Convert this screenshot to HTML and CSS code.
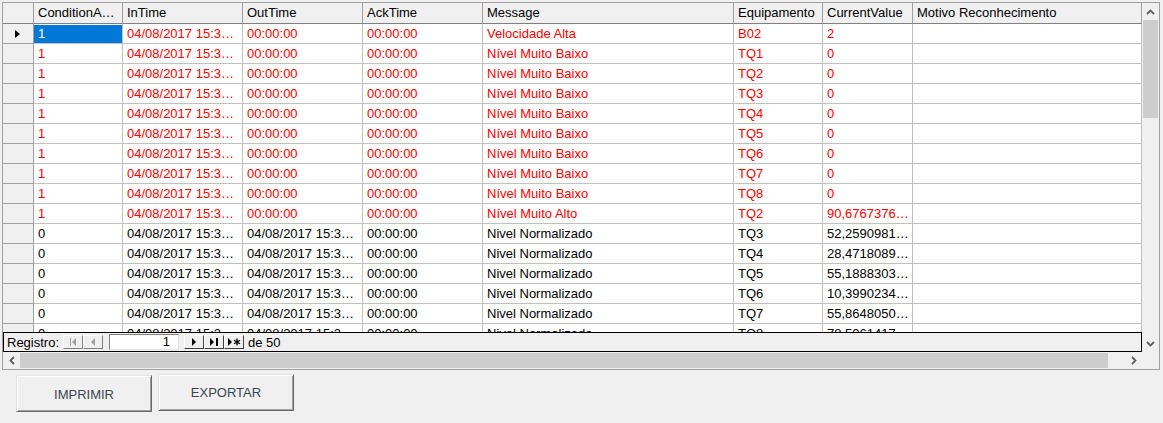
FILE: index.html
```html
<!DOCTYPE html>
<html lang="pt">
<head>
    <meta charset="UTF-8">
    <title>Alarmes</title>
    <link rel="stylesheet" href="styles.css">
</head>
<body>
    <div class="grid-frame">
        <div class="grid-body">
            <div class="grid-row grid-head">
                <div class="cell row-head"></div>
                <div class="cell">ConditionA…</div>
                <div class="cell">InTime</div>
                <div class="cell">OutTime</div>
                <div class="cell">AckTime</div>
                <div class="cell">Message</div>
                <div class="cell">Equipamento</div>
                <div class="cell">CurrentValue</div>
                <div class="cell">Motivo Reconhecimento</div>
            </div>

            <div class="grid-row active">
                <div class="cell row-head"><span class="current-mark"></span></div>
                <div class="cell selected">1</div>
                <div class="cell">04/08/2017 15:3…</div>
                <div class="cell">00:00:00</div>
                <div class="cell">00:00:00</div>
                <div class="cell">Velocidade Alta</div>
                <div class="cell">B02</div>
                <div class="cell">2</div>
                <div class="cell"></div>
            </div>
            <div class="grid-row active">
                <div class="cell row-head"></div>
                <div class="cell">1</div>
                <div class="cell">04/08/2017 15:3…</div>
                <div class="cell">00:00:00</div>
                <div class="cell">00:00:00</div>
                <div class="cell">Nível Muito Baixo</div>
                <div class="cell">TQ1</div>
                <div class="cell">0</div>
                <div class="cell"></div>
            </div>
            <div class="grid-row active">
                <div class="cell row-head"></div>
                <div class="cell">1</div>
                <div class="cell">04/08/2017 15:3…</div>
                <div class="cell">00:00:00</div>
                <div class="cell">00:00:00</div>
                <div class="cell">Nível Muito Baixo</div>
                <div class="cell">TQ2</div>
                <div class="cell">0</div>
                <div class="cell"></div>
            </div>
            <div class="grid-row active">
                <div class="cell row-head"></div>
                <div class="cell">1</div>
                <div class="cell">04/08/2017 15:3…</div>
                <div class="cell">00:00:00</div>
                <div class="cell">00:00:00</div>
                <div class="cell">Nível Muito Baixo</div>
                <div class="cell">TQ3</div>
                <div class="cell">0</div>
                <div class="cell"></div>
            </div>
            <div class="grid-row active">
                <div class="cell row-head"></div>
                <div class="cell">1</div>
                <div class="cell">04/08/2017 15:3…</div>
                <div class="cell">00:00:00</div>
                <div class="cell">00:00:00</div>
                <div class="cell">Nível Muito Baixo</div>
                <div class="cell">TQ4</div>
                <div class="cell">0</div>
                <div class="cell"></div>
            </div>
            <div class="grid-row active">
                <div class="cell row-head"></div>
                <div class="cell">1</div>
                <div class="cell">04/08/2017 15:3…</div>
                <div class="cell">00:00:00</div>
                <div class="cell">00:00:00</div>
                <div class="cell">Nível Muito Baixo</div>
                <div class="cell">TQ5</div>
                <div class="cell">0</div>
                <div class="cell"></div>
            </div>
            <div class="grid-row active">
                <div class="cell row-head"></div>
                <div class="cell">1</div>
                <div class="cell">04/08/2017 15:3…</div>
                <div class="cell">00:00:00</div>
                <div class="cell">00:00:00</div>
                <div class="cell">Nível Muito Baixo</div>
                <div class="cell">TQ6</div>
                <div class="cell">0</div>
                <div class="cell"></div>
            </div>
            <div class="grid-row active">
                <div class="cell row-head"></div>
                <div class="cell">1</div>
                <div class="cell">04/08/2017 15:3…</div>
                <div class="cell">00:00:00</div>
                <div class="cell">00:00:00</div>
                <div class="cell">Nível Muito Baixo</div>
                <div class="cell">TQ7</div>
                <div class="cell">0</div>
                <div class="cell"></div>
            </div>
            <div class="grid-row active">
                <div class="cell row-head"></div>
                <div class="cell">1</div>
                <div class="cell">04/08/2017 15:3…</div>
                <div class="cell">00:00:00</div>
                <div class="cell">00:00:00</div>
                <div class="cell">Nível Muito Baixo</div>
                <div class="cell">TQ8</div>
                <div class="cell">0</div>
                <div class="cell"></div>
            </div>
            <div class="grid-row active">
                <div class="cell row-head"></div>
                <div class="cell">1</div>
                <div class="cell">04/08/2017 15:3…</div>
                <div class="cell">00:00:00</div>
                <div class="cell">00:00:00</div>
                <div class="cell">Nível Muito Alto</div>
                <div class="cell">TQ2</div>
                <div class="cell">90,6767376…</div>
                <div class="cell"></div>
            </div>
            <div class="grid-row">
                <div class="cell row-head"></div>
                <div class="cell">0</div>
                <div class="cell">04/08/2017 15:3…</div>
                <div class="cell">04/08/2017 15:3…</div>
                <div class="cell">00:00:00</div>
                <div class="cell">Nivel Normalizado</div>
                <div class="cell">TQ3</div>
                <div class="cell">52,2590981…</div>
                <div class="cell"></div>
            </div>
            <div class="grid-row">
                <div class="cell row-head"></div>
                <div class="cell">0</div>
                <div class="cell">04/08/2017 15:3…</div>
                <div class="cell">04/08/2017 15:3…</div>
                <div class="cell">00:00:00</div>
                <div class="cell">Nivel Normalizado</div>
                <div class="cell">TQ4</div>
                <div class="cell">28,4718089…</div>
                <div class="cell"></div>
            </div>
            <div class="grid-row">
                <div class="cell row-head"></div>
                <div class="cell">0</div>
                <div class="cell">04/08/2017 15:3…</div>
                <div class="cell">04/08/2017 15:3…</div>
                <div class="cell">00:00:00</div>
                <div class="cell">Nivel Normalizado</div>
                <div class="cell">TQ5</div>
                <div class="cell">55,1888303…</div>
                <div class="cell"></div>
            </div>
            <div class="grid-row">
                <div class="cell row-head"></div>
                <div class="cell">0</div>
                <div class="cell">04/08/2017 15:3…</div>
                <div class="cell">04/08/2017 15:3…</div>
                <div class="cell">00:00:00</div>
                <div class="cell">Nivel Normalizado</div>
                <div class="cell">TQ6</div>
                <div class="cell">10,3990234…</div>
                <div class="cell"></div>
            </div>
            <div class="grid-row">
                <div class="cell row-head"></div>
                <div class="cell">0</div>
                <div class="cell">04/08/2017 15:3…</div>
                <div class="cell">04/08/2017 15:3…</div>
                <div class="cell">00:00:00</div>
                <div class="cell">Nivel Normalizado</div>
                <div class="cell">TQ7</div>
                <div class="cell">55,8648050…</div>
                <div class="cell"></div>
            </div>
            <div class="grid-row">
                <div class="cell row-head"></div>
                <div class="cell">0</div>
                <div class="cell">04/08/2017 15:3…</div>
                <div class="cell">04/08/2017 15:3…</div>
                <div class="cell">00:00:00</div>
                <div class="cell">Nivel Normalizado</div>
                <div class="cell">TQ8</div>
                <div class="cell">78,5061417…</div>
                <div class="cell"></div>
            </div>
        </div>

        <!-- record navigator -->
        <div class="nav-bar">
            <span class="nav-label">Registro:</span>
            <span class="nav-group">
                <span class="nav-btn disabled">
                    <svg width="18" height="12" viewBox="0 0 18 12"><rect x="6" y="2" width="1" height="8" fill="#a0a0a0"/><polygon points="12,2 12,10 8,6" fill="#a0a0a0"/></svg>
                </span>
                <span class="nav-btn disabled">
                    <svg width="18" height="12" viewBox="0 0 18 12"><polygon points="11,2 11,10 7,6" fill="#a0a0a0"/></svg>
                </span>
            </span>
            <span class="nav-input">1</span>
            <span class="nav-group">
                <span class="nav-btn">
                    <svg width="18" height="12" viewBox="0 0 18 12"><polygon points="7,2 7,10 11,6" fill="#000"/></svg>
                </span>
                <span class="nav-btn">
                    <svg width="18" height="12" viewBox="0 0 18 12"><polygon points="5,2 5,10 9,6" fill="#000"/><rect x="11" y="2" width="2" height="8" fill="#000"/></svg>
                </span>
                <span class="nav-btn">
                    <svg width="18" height="12" viewBox="0 0 18 12"><polygon points="3,2 3,10 7,6" fill="#000"/><path d="M12 2.5v7M9 4.2l6 3.6M15 4.2l-6 3.6" stroke="#000" stroke-width="1.3"/></svg>
                </span>
            </span>
            <span class="nav-total">de 50</span>
        </div>

        <div class="vscroll">
            <div class="arrow">
                <svg width="9" height="6" viewBox="0 0 9 6"><polyline points="1,5 4.5,1.5 8,5" fill="none" stroke="#606060" stroke-width="1.8"/></svg>
            </div>
            <div class="thumb"></div>
            <div class="track"></div>
            <div class="arrow">
                <svg width="9" height="6" viewBox="0 0 9 6"><polyline points="1,1 4.5,4.5 8,1" fill="none" stroke="#606060" stroke-width="1.8"/></svg>
            </div>
        </div>

        <div class="hscroll">
            <div class="arrow">
                <svg width="6" height="9" viewBox="0 0 6 9"><polyline points="5,1 1.5,4.5 5,8" fill="none" stroke="#606060" stroke-width="1.8"/></svg>
            </div>
            <div class="thumb"></div>
            <div class="track"></div>
            <div class="arrow">
                <svg width="6" height="9" viewBox="0 0 6 9"><polyline points="1,1 4.5,4.5 1,8" fill="none" stroke="#606060" stroke-width="1.8"/></svg>
            </div>
        </div>
        <div class="corner"></div>
    </div>

    <div class="actions">
        <button class="btn btn-print">IMPRIMIR</button>
        <button class="btn">EXPORTAR</button>
    </div>
</body>
</html>
```

FILE: styles.css
```css
:root {
    --face: #f0f0f0;
    --line: #c0c0c0;
    --head-line: #a0a0a0;
    --alarm: #ff0000;
    --scroll-thumb: #cdcdcd;
}

body {
    margin: 0;
    background: var(--face);
    font-family: 'Liberation Sans', Arial, sans-serif;
    font-size: 13px;
    color: #000;
}

/* DataGrid frame */
.grid-frame {
    display: grid;
    grid-template-columns: 1fr 17px;
    grid-template-rows: 329px 20px 17px;
    width: 1158px;
    margin: 2px 0 0 2px;
    border: 1px solid #a0a0a0;
    box-sizing: border-box;
    background: var(--face);
}
.grid-body {
    grid-column: 1;
    grid-row: 1;
    overflow: hidden;
    background: #fff;
}
.grid-row {
    display: grid;
    grid-template-columns: 31px 89px 120px 120px 120px 251px 89px 90px 1fr;
    height: 20px;
}
.cell {
    box-sizing: border-box;
    border-right: 1px solid var(--line);
    border-bottom: 1px solid var(--line);
    padding-left: 4px;
    line-height: 19px;
    white-space: nowrap;
    overflow: hidden;
}
.grid-head {
    height: 21px;
    background: var(--face);
}
.grid-head .cell {
    line-height: 20px;
    border-right-color: var(--head-line);
    border-bottom-color: #808080;
}
.row-head {
    background: var(--face);
    border-right-color: var(--head-line);
    border-bottom-color: var(--head-line);
    display: flex;
    align-items: center;
    padding-left: 12px;
}
.current-mark {
    width: 0;
    height: 0;
    border-top: 4px solid transparent;
    border-bottom: 4px solid transparent;
    border-left: 5px solid #000;
}
.active .cell {
    color: var(--alarm);
}
.active .cell.selected {
    background: #0078d7;
    color: #fff;
    box-shadow: inset 0 1px 0 #fff;
}

/* record navigator */
.nav-bar {
    grid-column: 1;
    grid-row: 2;
    display: flex;
    align-items: center;
    border: 1px solid #000;
    box-sizing: border-box;
    padding-left: 3px;
    background: var(--face);
}
.nav-label {
    margin-right: 4px;
}
.nav-group {
    display: flex;
}
.nav-btn {
    display: flex;
    align-items: center;
    justify-content: center;
    width: 20px;
    height: 14px;
    box-sizing: border-box;
    border-top: 1px solid #fff;
    border-left: 1px solid #fff;
    border-right: 1px solid #404040;
    border-bottom: 1px solid #404040;
    background: var(--face);
}
.nav-btn.disabled {
    border-right-color: #808080;
    border-bottom-color: #808080;
}
.nav-input {
    width: 70px;
    height: 16px;
    box-sizing: border-box;
    margin: 0 5px 0 6px;
    padding-right: 8px;
    text-align: right;
    line-height: 14px;
    background: #fff;
    border-top: 1px solid #808080;
    border-left: 1px solid #808080;
    border-right: 1px solid #e3e3e3;
    border-bottom: 1px solid #e3e3e3;
}
.nav-total {
    margin-left: 4px;
}

/* scrollbars */
.vscroll {
    grid-column: 2;
    grid-row: 1 / 3;
    display: flex;
    flex-direction: column;
    background: var(--face);
}
.vscroll .arrow {
    height: 17px;
    display: flex;
    align-items: center;
    justify-content: center;
}
.vscroll .thumb {
    height: 98px;
    margin: 0 1px;
    background: var(--scroll-thumb);
}
.vscroll .track {
    flex: 1;
}
.hscroll {
    grid-column: 1;
    grid-row: 3;
    display: flex;
    background: var(--face);
}
.hscroll .arrow {
    width: 17px;
    display: flex;
    align-items: center;
    justify-content: center;
}
.hscroll .thumb {
    width: 1088px;
    margin: 1px 0;
    background: var(--scroll-thumb);
}
.hscroll .track {
    flex: 1;
}
.corner {
    grid-column: 2;
    grid-row: 3;
    background: var(--face);
}

/* buttons */
.actions {
    display: flex;
    align-items: flex-start;
    gap: 6px;
    padding-left: 16px;
}
.btn {
    width: 136px;
    height: 37px;
    margin-top: 4px;
    padding: 0;
    border: 1px solid;
    border-color: #e3e3e3 #696969 #696969 #e3e3e3;
    box-shadow: inset 1px 1px 0 #fff, inset -1px -1px 0 #a0a0a0;
    background: #f0f0f0;
    color: #3b4552;
    font-family: 'Liberation Sans', Arial, sans-serif;
    font-size: 13px;
}
.btn-print {
    margin-top: 5px;
    padding-top: 2px;
}
```
